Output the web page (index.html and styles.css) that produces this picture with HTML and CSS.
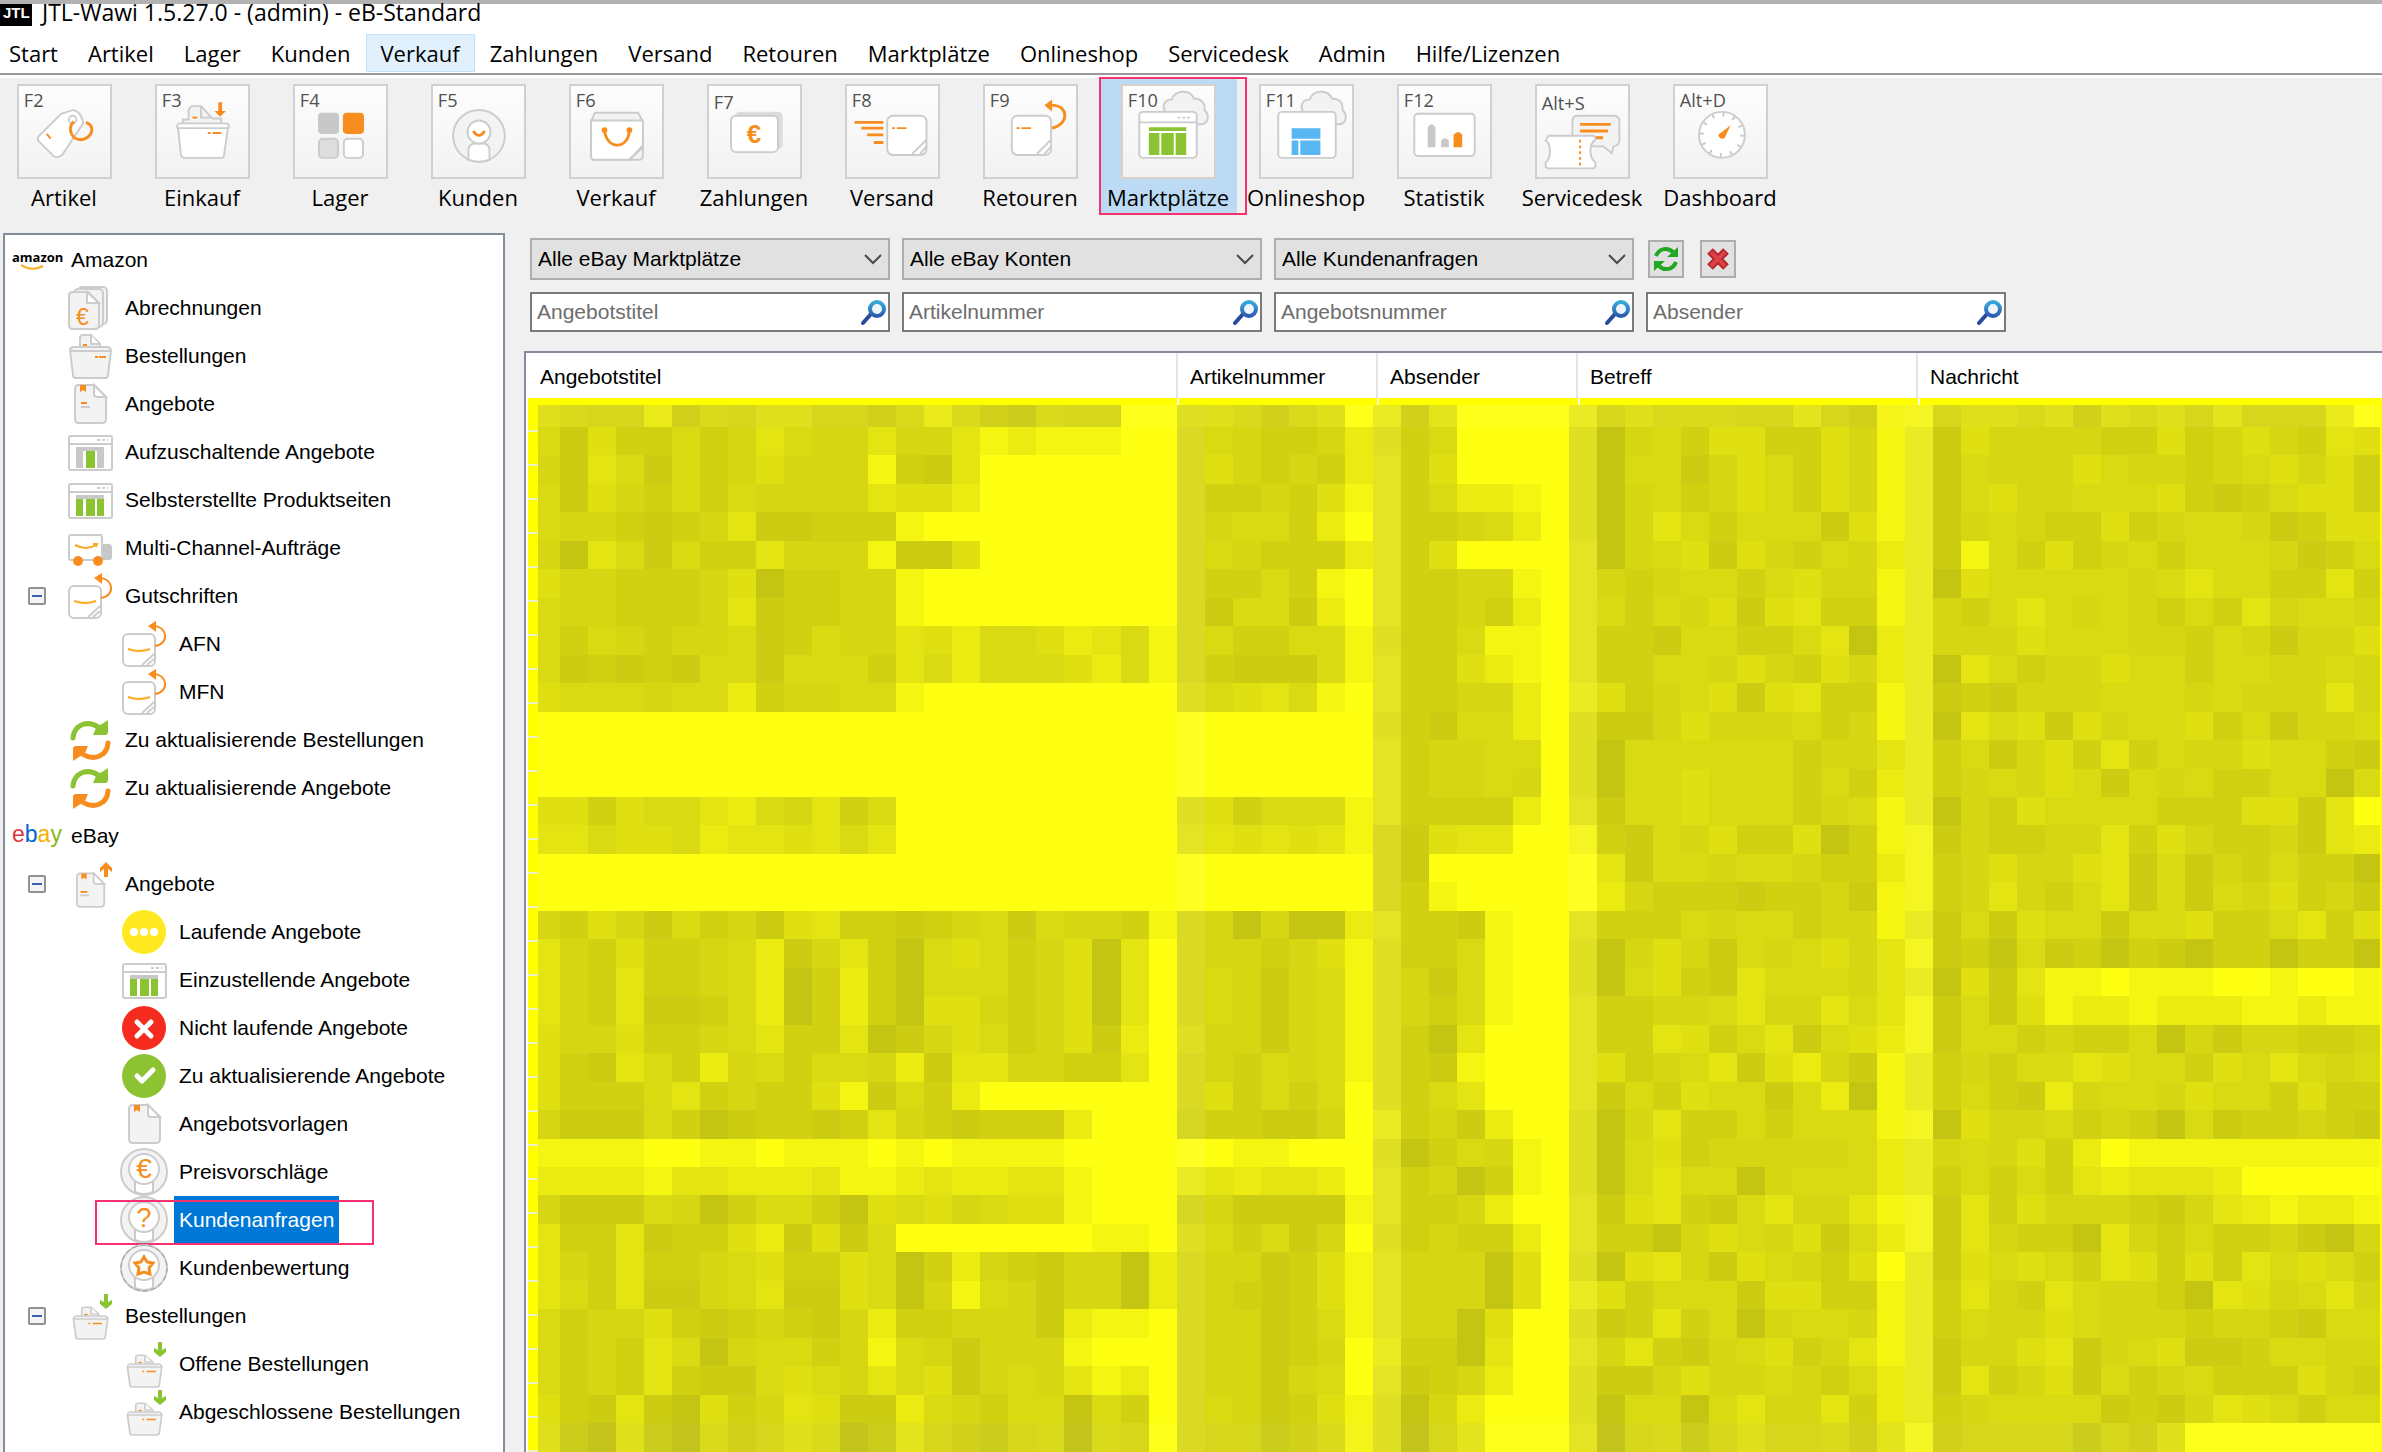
FILE: index.html
```html
<!DOCTYPE html>
<html lang="de">
<head>
<meta charset="utf-8">
<title>JTL-Wawi 1.5.27.0</title>
<link rel="stylesheet" href="styles.css">
</head>
<body>
<svg class="defs" aria-hidden="true">
  <defs>
    <linearGradient id="lens" x1="0" y1="0" x2="0" y2="1"><stop offset="0" stop-color="#35a9dc"/><stop offset="1" stop-color="#2f5cb0"/></linearGradient>
    <g id="page-shape"><path class="g" d="M13 5H28L40 17V39Q40 43 36 43H13Q9 43 9 39V9Q9 5 13 5Z"/><path class="w" d="M28 5V14Q28 17 31 17H40Z"/><path class="of" d="M14 5H20V12L17 10L14 12Z"/></g>
    <g id="shop-frame"><rect class="w" x="3" y="8" width="43" height="34" rx="2"/><path class="l" d="M3 16H46"/><path class="dots" d="M31 12H42"/><path class="gf" d="M10 19H38V23H10Z"/></g>
    <g id="basket-shape"><path class="g" d="M14 19V6Q14 3 17 3H25L34 12V19"/><path class="w" d="M25 3V12H33"/><path class="o2" d="M17 13H21"/><path class="g" d="M4 18Q4 16 7 15H42Q45 16 45 19L42 43Q42 46 39 46H10Q7 46 7 43Z"/><path class="l" d="M5 19H44"/></g>
    <g id="badge-shape"><circle class="g" cx="24" cy="24" r="23"/><path class="w" d="M15 30H33V44Q24 48 15 44Z"/><circle class="w" cx="24" cy="21" r="15"/></g>
    <symbol id="euro-doc" viewBox="0 0 48 48"><rect class="g" x="12" y="3" width="29" height="37" rx="4"/><rect class="g" x="8" y="5" width="29" height="38" rx="4"/><path class="g" d="M7 8H22L33 19V41Q33 45 29 45H7Q3 45 3 41V12Q3 8 7 8Z"/><path class="w" d="M21 8V19H33Z"/><text class="ot" x="10" y="41" font-size="23">€</text></symbol>
    <symbol id="basket" viewBox="0 0 48 48"><use href="#basket-shape"/><path class="o2" d="M29 25H32M33 25H40"/></symbol>
    <symbol id="basket-in" viewBox="0 0 48 48"><g transform="translate(4 13) scale(.84 .74)"><use href="#basket-shape"/><path class="o2" d="M22 25H24M27 25H38"/></g><path class="vf" d="M38 2H42V10L46 8V12L40 17L34 12V8L38 10Z"/></symbol>
    <symbol id="page" viewBox="0 0 48 48"><use href="#page-shape"/></symbol>
    <symbol id="page-lines" viewBox="0 0 48 48"><use href="#page-shape"/><path class="o2" d="M15 23H21"/><path class="l" d="M15 27H24"/></symbol>
    <symbol id="page-up" viewBox="0 0 48 48"><g transform="translate(3 9) scale(.88)"><use href="#page-shape"/><path class="o2" d="M13 26H21"/><path class="l" d="M13 30H23"/></g><path class="of" d="M38 17H42V9L46 12V8L40 2L34 8V12L38 9Z"/></symbol>
    <symbol id="shop-one" viewBox="0 0 48 48"><use href="#shop-frame"/><path class="gf" d="M10 23H17V40H10ZM31 23H38V40H31Z"/><path class="vf" d="M20 23H29V40H20Z"/></symbol>
    <symbol id="shop-all" viewBox="0 0 48 48"><use href="#shop-frame"/><path class="vf" d="M10 23H17V40H10ZM20 23H29V40H20ZM31 23H38V40H31Z"/></symbol>
    <symbol id="truck" viewBox="0 0 48 48"><path class="gf" d="M36 20H43Q46 20 46 24V33Q46 36 43 36H36Z"/><rect class="w" x="3" y="11" width="33" height="25" rx="2"/><path class="y" d="M9 21Q20 27 30 21M27 20L31 20L30 23"/><circle class="of" cx="12" cy="37" r="5"/><circle class="of" cx="32" cy="37" r="5"/></symbol>
    <symbol id="refund" viewBox="0 0 48 48"><rect class="w" x="3" y="14" width="32" height="32" rx="5"/><path class="l" d="M22 45L34 34M27 45L34 39"/><path class="y" d="M8 29Q19 33 30 29"/><path class="o2" d="M35 26C42 25 46 20 45 15C44 9 39 6 33 6"/><path class="of" d="M28 6L36 1L36 12Z"/></symbol>
    <symbol id="sync" viewBox="0 0 48 48"><path class="v5" d="M7 22C8 9 21 3 34 12"/><path class="vf" d="M42 4V16Q42 19 39 19H27L30 12Z"/><path class="o5" d="M42 27C41 40 28 46 15 37"/><path class="of" d="M7 45V33Q7 30 10 30H22L19 37Z"/></symbol>
    <symbol id="running" viewBox="0 0 48 48"><circle cx="24" cy="24" r="22" fill="#ffe920"/><circle cx="14" cy="24" r="4" fill="#fff"/><circle cx="24" cy="24" r="4" fill="#fff"/><circle cx="34" cy="24" r="4" fill="#fff"/></symbol>
    <symbol id="stopped" viewBox="0 0 48 48"><circle cx="24" cy="24" r="22" fill="#f52b1e"/><path class="wx" d="M17 18L31 32M31 18L17 32"/></symbol>
    <symbol id="done" viewBox="0 0 48 48"><circle cx="24" cy="24" r="22" fill="#8cc332"/><path class="wx" d="M17 24L22 29L33 18"/></symbol>
    <symbol id="badge-euro" viewBox="0 0 48 48"><use href="#badge-shape"/><text class="ot" x="24" y="30" text-anchor="middle" font-size="28">€</text></symbol>
    <symbol id="badge-ask" viewBox="0 0 48 48"><use href="#badge-shape"/><text class="ot" x="24" y="31" text-anchor="middle" font-size="27">?</text></symbol>
    <symbol id="badge-star" viewBox="0 0 48 48"><use href="#badge-shape"/><circle cx="24" cy="24" r="23" fill="none" stroke="#999" stroke-dasharray="5 3"/><path d="M24 13L27 18L33 19L29 24L30 30L24 28L18 30L19 24L15 19L21 18Z" fill="#fff" stroke="#f78d1e" stroke-width="3"/></symbol>
    <symbol id="magnifier" viewBox="0 0 28 28"><path d="M3 25L11 16" stroke="#27489c" stroke-width="4" stroke-linecap="round"/><circle cx="17" cy="11" r="7" fill="#eef6fc" stroke="url(#lens)" stroke-width="4"/></symbol>
    <symbol id="chevron" viewBox="0 0 20 12"><path d="M2 2L10 10L18 2" fill="none" stroke="#4a4a4a" stroke-width="2"/></symbol>
    <g id="cloud"><path class="g" d="M44 27C40 20 44 14 51 14C54 4 70 3 74 13C82 13 86 18 85 25C91 30 89 40 81 40H60Z"/></g>
  </defs>
</svg>

<header class="titlebar"><svg class="app-logo" viewBox="0 0 32 22"><rect width="32" height="22"/><text x="3" y="14" font-size="15">JTL</text></svg><span>JTL-Wawi 1.5.27.0 - (admin) - eB-Standard</span></header>
<nav class="menubar" aria-label="Menü">
  <button>Start</button><button>Artikel</button><button>Lager</button><button>Kunden</button><button class="active">Verkauf</button><button>Zahlungen</button><button>Versand</button><button>Retouren</button><button>Marktplätze</button><button>Onlineshop</button><button>Servicedesk</button><button>Admin</button><button>Hilfe/Lizenzen</button>
</nav>

<div class="toolbar" role="toolbar" aria-label="Module">
  <button class="tool"><svg class="tile" viewBox="0 0 95 95"><text class="key" x="5" y="22">F2</text><path class="w" d="M21 52L44 29L57 25Q65 27 67 39L45 72Q38 77 34 71L20 57Q19 54 21 52Z"/><circle class="l" cx="56" cy="35" r="4"/><path class="o3" d="M57 37C50 45 55 57 66 56C77 53 80 42 70 38"/><path class="o2" d="M29 50L33 55"/></svg><span>Artikel</span></button>
  <button class="tool"><svg class="tile" viewBox="0 0 95 95"><text class="key" x="5" y="22">F3</text><path class="g" d="M27 40V35H33V25Q34 21 38 21H46L58 34H67V40"/><path class="l" d="M46 21V33H57"/><path class="o2" d="M37 33H42"/><rect class="w" x="21" y="39" width="54" height="6" rx="3"/><path class="w" d="M22 44H74L70 72Q70 75 67 75H29Q26 75 25 72Z"/><path class="o2" d="M53 49H56M58 49H67"/><path class="of" d="M64 17H68V26H72L66 32L60 26H64Z"/></svg><span>Einkauf</span></button>
  <button class="tool"><svg class="tile" viewBox="0 0 95 95"><text class="key" x="5" y="22">F4</text><rect class="gf" x="24" y="28" width="22" height="22" rx="4"/><rect class="of" x="50" y="28" width="22" height="22" rx="4"/><rect x="25" y="55" width="20" height="20" rx="4" fill="#ddd" stroke="#ccc" stroke-width="2"/><rect class="w" x="51" y="55" width="20" height="20" rx="4"/></svg><span>Lager</span></button>
  <button class="tool"><svg class="tile" viewBox="0 0 95 95"><text class="key" x="5" y="22">F5</text><circle class="g" cx="48" cy="52" r="27"/><path class="w" d="M37 77V66Q38 60 44 60H52Q58 60 59 66V77Q48 81 37 77Z"/><circle class="w" cx="48" cy="48" r="12"/><path class="o3" d="M42 47Q48 56 54 47"/></svg><span>Kunden</span></button>
  <button class="tool"><svg class="tile" viewBox="0 0 95 95"><text class="key" x="5" y="22">F6</text><path class="g" d="M25 28H70L75 37V73Q75 77 71 77H25Q21 77 21 73V37Z"/><path class="w" d="M21 36H75V64L61 77H25Q21 77 21 73Z"/><path class="l" d="M61 77L75 62"/><path class="o3" d="M35 46C37 67 60 67 61 46"/><circle class="of" cx="35" cy="46" r="3"/><circle class="of" cx="61" cy="46" r="3"/></svg><span>Verkauf</span></button>
  <button class="tool"><svg class="tile" viewBox="0 0 95 95"><text class="key" x="5" y="24">F7</text><rect x="27" y="27" width="50" height="39" rx="5" fill="#ddd"/><rect class="w" x="23" y="31" width="49" height="38" rx="5"/><text class="ot bold" x="47" y="59" text-anchor="middle" font-size="27">€</text></svg><span>Zahlungen</span></button>
  <button class="tool"><svg class="tile" viewBox="0 0 95 95"><text class="key" x="5" y="22">F8</text><path class="o3" d="M8 38H38M15 44H38M21 51H38M28 59H38"/><rect class="w" x="42" y="31" width="41" height="41" rx="6"/><path class="l" d="M68 71L83 56M76 71L83 63"/><path class="o2" d="M47 44H50M52 44H62"/></svg><span>Versand</span></button>
  <button class="tool"><svg class="tile" viewBox="0 0 95 95"><text class="key" x="5" y="22">F9</text><rect class="w" x="28" y="31" width="41" height="41" rx="6"/><path class="l" d="M54 71L69 56M62 71L69 63"/><path class="o2" d="M33 44H36M38 44H48"/><path class="o3" d="M70 44C87 41 89 20 69 20"/><path class="of" d="M62 20L70 14V27Z"/></svg><span>Retouren</span></button>
  <button class="tool selected"><svg class="tile" viewBox="0 0 95 95"><use href="#cloud"/><text class="key" x="5" y="22">F10</text><rect class="w" x="17" y="27" width="60" height="48" rx="4"/><path class="l" d="M17 38H77"/><path class="dots" d="M57 33H72"/><path d="M27 43H66V47H27ZM27 49H38V72H27ZM40 49H53V72H40ZM55 49H66V72H55Z" class="vf"/></svg><span>Marktplätze</span></button>
  <button class="tool"><svg class="tile" viewBox="0 0 95 95"><use href="#cloud"/><text class="key" x="5" y="22">F11</text><rect class="w" x="18" y="27" width="60" height="48" rx="4"/><path d="M32 44H62V55H32ZM32 57H39V72H32ZM41 57H62V72H41Z" fill="#58b7f2"/></svg><span>Onlineshop</span></button>
  <button class="tool"><svg class="tile" viewBox="0 0 95 95"><text class="key" x="5" y="22">F12</text><rect class="w" x="16" y="29" width="63" height="44" rx="4"/><path class="gf" d="M30 64V43Q34 37 38 43V64ZM44 64V57Q48 52 52 57V64Z"/><path class="of" d="M57 64V51Q62 45 66 51V64Z"/></svg><span>Statistik</span></button>
  <button class="tool"><svg class="tile" viewBox="0 0 95 95"><text class="key" x="5" y="25">Alt+S</text><path class="g" d="M42 31H80Q86 31 86 37V57Q86 62 80 63L78 70L69 63H42Q37 62 37 57V37Q37 31 42 31Z"/><path class="o3" d="M45 40H77M45 47H74M60 54H69"/><path class="w" d="M12 52H58Q61 52 61 56C54 61 54 74 61 80V83Q61 86 58 86H12Q9 86 9 83V80C15 76 15 60 9 57Z"/><path class="o2" d="M45 56V84" stroke-dasharray="3 3"/></svg><span>Servicedesk</span></button>
  <button class="tool"><svg class="tile" viewBox="0 0 95 95"><text class="key" x="5" y="22">Alt+D</text><circle class="w" cx="49" cy="51" r="24"/><circle cx="49" cy="51" r="21" fill="none" stroke="#c8c8c8" stroke-width="4" stroke-dasharray="2 9"/><path class="of" d="M58 41L52 54Q48 57 45 52Q46 49 49 48Z"/></svg><span>Dashboard</span></button>
</div>

<div class="workspace">
  <aside class="sidebar">
    <ul class="tree">
      <li class="row l0"><svg class="ico" viewBox="0 0 48 48"><text class="amazon" x="0" y="26">amazon</text><path class="y" d="M9 29Q20 36 31 30"/></svg><a href="#">Amazon</a></li>
      <li class="row l1"><svg class="ico"><use href="#euro-doc"/></svg><a href="#">Abrechnungen</a></li>
      <li class="row l1"><svg class="ico"><use href="#basket"/></svg><a href="#">Bestellungen</a></li>
      <li class="row l1"><svg class="ico"><use href="#page-lines"/></svg><a href="#">Angebote</a></li>
      <li class="row l1"><svg class="ico"><use href="#shop-one"/></svg><a href="#">Aufzuschaltende Angebote</a></li>
      <li class="row l1"><svg class="ico"><use href="#shop-all"/></svg><a href="#">Selbsterstellte Produktseiten</a></li>
      <li class="row l1"><svg class="ico"><use href="#truck"/></svg><a href="#">Multi-Channel-Aufträge</a></li>
      <li class="row l1 parent"><button class="fold" aria-label="Gutschriften einklappen"></button><svg class="ico"><use href="#refund"/></svg><a href="#">Gutschriften</a></li>
      <li class="row l2"><svg class="ico"><use href="#refund"/></svg><a href="#">AFN</a></li>
      <li class="row l2"><svg class="ico"><use href="#refund"/></svg><a href="#">MFN</a></li>
      <li class="row l1"><svg class="ico"><use href="#sync"/></svg><a href="#">Zu aktualisierende Bestellungen</a></li>
      <li class="row l1"><svg class="ico"><use href="#sync"/></svg><a href="#">Zu aktualisierende Angebote</a></li>
      <li class="row l0"><svg class="ico" viewBox="0 0 48 48"><text class="ebay" x="0" y="30"><tspan fill="#e53238">e</tspan><tspan fill="#0064d2">b</tspan><tspan fill="#f5af02">a</tspan><tspan fill="#86b817">y</tspan></text></svg><a href="#">eBay</a></li>
      <li class="row l1 parent"><button class="fold" aria-label="Angebote einklappen"></button><svg class="ico"><use href="#page-up"/></svg><a href="#">Angebote</a></li>
      <li class="row l2"><svg class="ico"><use href="#running"/></svg><a href="#">Laufende Angebote</a></li>
      <li class="row l2"><svg class="ico"><use href="#shop-all"/></svg><a href="#">Einzustellende Angebote</a></li>
      <li class="row l2"><svg class="ico"><use href="#stopped"/></svg><a href="#">Nicht laufende Angebote</a></li>
      <li class="row l2"><svg class="ico"><use href="#done"/></svg><a href="#">Zu aktualisierende Angebote</a></li>
      <li class="row l2"><svg class="ico"><use href="#page"/></svg><a href="#">Angebotsvorlagen</a></li>
      <li class="row l2"><svg class="ico"><use href="#badge-euro"/></svg><a href="#">Preisvorschläge</a></li>
      <li class="row l2 current"><svg class="ico"><use href="#badge-ask"/></svg><a href="#">Kundenanfragen</a></li>
      <li class="row l2"><svg class="ico"><use href="#badge-star"/></svg><a href="#">Kundenbewertung</a></li>
      <li class="row l1 parent"><button class="fold" aria-label="Bestellungen einklappen"></button><svg class="ico"><use href="#basket-in"/></svg><a href="#">Bestellungen</a></li>
      <li class="row l2"><svg class="ico"><use href="#basket-in"/></svg><a href="#">Offene Bestellungen</a></li>
      <li class="row l2"><svg class="ico"><use href="#basket-in"/></svg><a href="#">Abgeschlossene Bestellungen</a></li>
    </ul>
  </aside>

  <main class="content">
    <form class="filters">
      <div class="line">
        <label class="combo"><select aria-label="Marktplatz"><option>Alle eBay Marktplätze</option></select><svg><use href="#chevron"/></svg></label>
        <label class="combo"><select aria-label="Konto"><option>Alle eBay Konten</option></select><svg><use href="#chevron"/></svg></label>
        <label class="combo"><select aria-label="Anfragen"><option>Alle Kundenanfragen</option></select><svg><use href="#chevron"/></svg></label>
        <div class="actions">
          <button type="button" aria-label="Aktualisieren"><svg viewBox="0 0 28 28"><path d="M4 11C7 3 16 2 21 7" fill="none" stroke="#22a722" stroke-width="4"/><path d="M26 2V12H15Z" fill="#22a722"/><path d="M24 17C21 25 12 26 7 21" fill="none" stroke="#22a722" stroke-width="4"/><path d="M2 26V16H13Z" fill="#22a722"/></svg></button>
          <button type="button" aria-label="Löschen"><svg viewBox="0 0 28 28"><path d="M6 6L22 22M22 6L6 22" stroke="#b3262b" stroke-width="8"/><path d="M7 7L21 21M21 7L7 21" stroke="#dd4046" stroke-width="4"/></svg></button>
        </div>
      </div>
      <div class="line">
        <div class="search"><input aria-label="Angebotstitel" placeholder="Angebotstitel"><svg><use href="#magnifier"/></svg></div>
        <div class="search"><input aria-label="Artikelnummer" placeholder="Artikelnummer"><svg><use href="#magnifier"/></svg></div>
        <div class="search"><input aria-label="Angebotsnummer" placeholder="Angebotsnummer"><svg><use href="#magnifier"/></svg></div>
        <div class="search"><input aria-label="Absender" placeholder="Absender"><svg><use href="#magnifier"/></svg></div>
      </div>
    </form>
    <table class="requests">
      <colgroup><col class="c-title"><col class="c-num"><col class="c-num"><col class="c-subject"><col></colgroup>
      <thead><tr><th>Angebotstitel</th><th>Artikelnummer</th><th>Absender</th><th>Betreff</th><th>Nachricht</th></tr></thead>
      <tbody><tr><td colspan="5"><svg id="mosaic" viewBox="0 0 1854 1054" shape-rendering="crispEdges" aria-label="Unkenntlich gemachte Daten"></svg></td></tr></tbody>
    </table>
  </main>
</div>
<script src="mosaic.js"></script>
</body>
</html>
```
FILE: styles.css
```css
*, *::after { box-sizing: border-box; }
body { margin: 0; height: 100vh; overflow: hidden; display: flex; flex-direction: column; background: #f0f0f0; color: #000; font: 21px/24px "Liberation Sans", Arial, sans-serif; }
button, input, select { font: inherit; color: inherit; margin: 0; border: 0; border-radius: 0; background: none; padding: 0; }
a { color: inherit; text-decoration: none; }
.defs { position: absolute; width: 0; height: 0; }

.g { fill: #f3f3f3; stroke: #ccc; stroke-width: 2; }
.w { fill: #fff; stroke: #ccc; stroke-width: 2; }
.l { fill: none; stroke: #ccc; stroke-width: 2; }
.dots { fill: none; stroke: #ccc; stroke-width: 2; stroke-dasharray: 3 2; }
.gf { fill: #c8c8c8; }
.of { fill: #f78d1e; }
.vf { fill: #8cc332; }
.o2 { fill: none; stroke: #f78d1e; stroke-width: 2; }
.o3 { fill: none; stroke: #f78d1e; stroke-width: 3; }
.o5 { fill: none; stroke: #f78d1e; stroke-width: 5; stroke-linecap: round; }
.v5 { fill: none; stroke: #8cc332; stroke-width: 5; stroke-linecap: round; }
.y { fill: none; stroke: #fca91f; stroke-width: 2; }
.wx { fill: none; stroke: #fff; stroke-width: 5; stroke-linecap: round; stroke-linejoin: round; }
.ot { fill: #f78d1e; font-family: "Liberation Sans", Arial, sans-serif; }
.bold { font-weight: bold; }

.titlebar { flex: none; height: 32px; display: flex; align-items: flex-start; gap: 10px; border-top: 4px solid #b2b2b2; background: #fff; font: 23px/16px "Open Sans", sans-serif; }
.app-logo { width: 32px; height: 22px; fill: #000; }
.app-logo text { fill: #fff; font-weight: bold; font-family: "Liberation Sans", Arial, sans-serif; }
.menubar { flex: none; height: 46px; display: flex; margin-left: -6px; padding: 2px 0 5px; background: #fff; border-bottom: 3px solid #fff; box-shadow: inset 0 -2px #999; font: 22px/36px "Open Sans", sans-serif; }
.menubar button { height: 38px; padding: 0 14px; border: 1px solid transparent; }
.menubar .active { background: #e1f0fd; border-color: #c4e1f8; }

.toolbar { flex: none; height: 155px; display: flex; margin-left: -5px; font: 22px/30px "Open Sans", sans-serif; }
.tool { position: relative; flex: none; width: 138px; height: 137px; display: flex; flex-direction: column; align-items: center; gap: 3px; padding-top: 6px; white-space: nowrap; }
.tile { flex: none; width: 95px; height: 95px; border: 2px solid #d0d0d0; background: linear-gradient(#fdfdfd, #f2f2f2); }
.key { font: 19px "Open Sans", sans-serif; fill: #505050; }
.selected { background: #bcdaf4; }
.selected .tile { border-color: #d9d0c8; }
.selected::after { content: ""; position: absolute; z-index: 1; left: 0; top: -1px; width: 148px; height: 138px; border: 2px solid #f7316f; }

.workspace { flex: 1; min-height: 0; display: flex; gap: 19px; padding-left: 3px; }
.sidebar { flex: none; width: 502px; border: 2px solid #858d9b; border-bottom: 0; background: #fff; overflow: hidden; }
.tree { list-style: none; margin: 0; padding: 1px 0 0; }
.row { position: relative; height: 48px; display: flex; align-items: center; gap: 6px; line-height: 48px; white-space: nowrap; }
.row a { padding: 0 5px; }
.l0 { padding-left: 7px; }
.l1 { padding-left: 61px; }
.l2 { padding-left: 115px; }
.parent { padding-left: 23px; }
.ico { flex: none; width: 48px; height: 48px; overflow: visible; }
.amazon { font: bold 13px "Open Sans", sans-serif; }
.ebay { font: 23px "Liberation Sans", Arial, sans-serif; }
.fold { width: 18px; height: 18px; margin-right: 14px; border: 2px solid #929292; border-radius: 2px; background: linear-gradient(#3f5fb0, #3f5fb0) center / 10px 2px no-repeat #f4f4f4; }
.current a { background: #0078d7; color: #fff; }
.current::after { content: ""; position: absolute; left: 90px; top: 4px; width: 279px; height: 45px; border: 2px solid #f7316f; }

.content { flex: 1; min-width: 0; display: flex; flex-direction: column; }
.filters { display: flex; flex-direction: column; gap: 12px; padding: 5px 0 19px 6px; }
.line { display: flex; gap: 12px; }
.combo, .search { position: relative; width: 360px; display: flex; align-items: center; }
.combo select { width: 100%; height: 42px; padding: 0 40px 0 6px; appearance: none; border: 2px solid #adadad; background: #e1e1e1; }
.combo svg { position: absolute; right: 7px; width: 20px; height: 12px; }
.search { height: 40px; border: 2px solid #7a7a7a; background: #fff; }
.search input { flex: 1; min-width: 0; height: 36px; padding: 0 5px; outline: 0; }
.search input::placeholder { color: #6d6d6d; opacity: 1; }
.search svg { width: 28px; height: 28px; }
.actions { display: flex; align-items: center; gap: 16px; padding-left: 2px; }
.actions button { width: 36px; height: 38px; display: grid; place-items: center; border: 2px solid #adadad; background: #e1e1e1; }
.actions svg { width: 28px; height: 28px; }

.requests { width: 100%; table-layout: fixed; border-collapse: separate; border-spacing: 0; border: solid #858d9b; border-width: 2px 0 0 2px; background: #fff; }
.c-title { width: 652px; }
.c-num { width: 200px; }
.c-subject { width: 340px; }
.requests th { height: 45px; padding: 2px 12px 0; text-align: left; font-weight: normal; border-right: 2px solid #e5e5e5; }
.requests th:first-child { padding-left: 14px; }
.requests th:last-child { border-right: 0; }
.requests td { padding: 0 0 0 2px; }
.requests td svg { display: block; width: 100%; }
```
FILE: mosaic.js
```js
// Brightness of each blurred block, 0 (dark) to 9 (bright), one string per row.
const rows = [
  "54337243553324742143399 55424597 269999 735444336328 83554525453633379",
  "41522423643363368788899 44322375 249999 503425522538 71533332252353265",
  "31641423533382169999999 45323276 259999 504413542538 71433354332345352",
  "41532424333365579999999 42232586 247789 503423542538 71453344452124552",
  "43321236112228999999999 43442796 223479 503642444158 71343225234431255",
  "30641422633381159999999 44322276 259999 603451532437 71842523424443124",
  "53322235022338999999999 42242896 223389 632344245338 70544444346442262",
  "43322236122338999999999 41441796 223279 642435156228 73246434324263443",
  "42432334124336574457648 44224485 224889 622144224607 73335444332431335",
  "41212144144426474445748 42111486 225789 622443532537 70642335442443343",
  "54443447233448999999999 54564896 223379 752345156228 71213334443433363",
  "99999999999999999999999 99999995 214479 511353334238 70645153445241334",
  "99999999999999999999999 99999996 233449 504444442336 72413526243354421",
  "99999999999999999999999 99999996 233439 504454442427 72343541434224404",
  "55254467436249999999999 55244486 222279 614454442348 70325444422255169",
  "66455476656469999999999 66565684 156699 821435225028 81322336253223167",
  "99999999999999999999999 99999994 199999 961443443227 82353356141324220",
  "99999999999999999999999 99999994 289999 973222122318 82363246141435231",
  "32531423156221234143328 43030076 221899 622243442338 71415441445224625",
  "63252234713620454235069 43323585 224899 503531434536 81204120210220220",
  "63262234702720444235069 44313485 314899 504521644436 70516889888998998",
  "63261124702720553235069 44313485 324899 622334633646 81415877877788788",
  "53352234622601354235179 53313485 206999 622652461457 81442322403133223",
  "52164273424437166332269 43243485 218999 652346157318 72324465442546434",
  "52224623225814279999999 45242495 246999 614254414708 72421734435442522",
  "31114201221263212227999 32211397 231799 503622424448 80533423204122321",
  "88889988988898988889999 99889995 024389 504523333347 73435279888888888",
  "77778667776887677668999 76766796 230289 504644034447 72424267666799999",
  "31114302442054534558999 33111186 223799 615621463368 81625333213678778",
  "62261225715149999999889 54241395 232279 622035435147 81632206324223103",
  "63262234522540273213307 43312586 333059 505631543259 71545426525264542",
  "64261134611540384313307 43212586 333059 752444155228 72632643320653463",
  "42335212321372233317889 43312486 330599 512624034438 72433543332332144",
  "42326403442384313338999 43312397 220699 636213452368 71335613451124433",
  "42326211454364513436879 43313496 123799 511353343247 71623514234222532",
  "52161052365117432440429 44312585 037999 504404633627 72344441213654244",
  "51051042354016321340439 43312485 036999 603413533426 82333313259999999"
];
const shade = [[196,196], [204,204], [209,209], [214,214], [218,218], [223,223], [228,228], [235,235], [245,245], [255,255]];
const tinted = new Set([23, 30, 37, 49]);
const svg = document.getElementById("mosaic");
const rect = (x, y, w, h, fill) => {
  const r = document.createElementNS("http://www.w3.org/2000/svg", "rect");
  for (const [k, v] of Object.entries({ x, y, width: w, height: h, fill })) r.setAttribute(k, v);
  svg.append(r);
};
rect(0, 0, 1854, 1054, "#ffff00");
for (const x of [649, 849, 1050, 1390]) rect(x, 0, 2, 7, "#fafae0");
for (let y = 32; y < 1054; y += 34) rect(0, y, 10, 2, "#f0f0c8");
const left = c => c === 0 ? 10 : Math.round(32 + (c - 1) * 28.025);
const top_ = r => r === 0 ? 7 : Math.round(29 + (r - 1) * 28.46);
rows.forEach((line, r) => {
  [...line.replaceAll(" ", "")].forEach((level, c) => {
    const x = left(c), y = top_(r);
    const [red, green] = shade[level];
    const blue = tinted.has(c) ? 36 : r === 0 || r === 36 ? 28 : 18;
    rect(x, y, Math.min(left(c + 1), 1852) - x, top_(r + 1) - y, `rgb(${red},${green},${blue})`);
  });
});
```
